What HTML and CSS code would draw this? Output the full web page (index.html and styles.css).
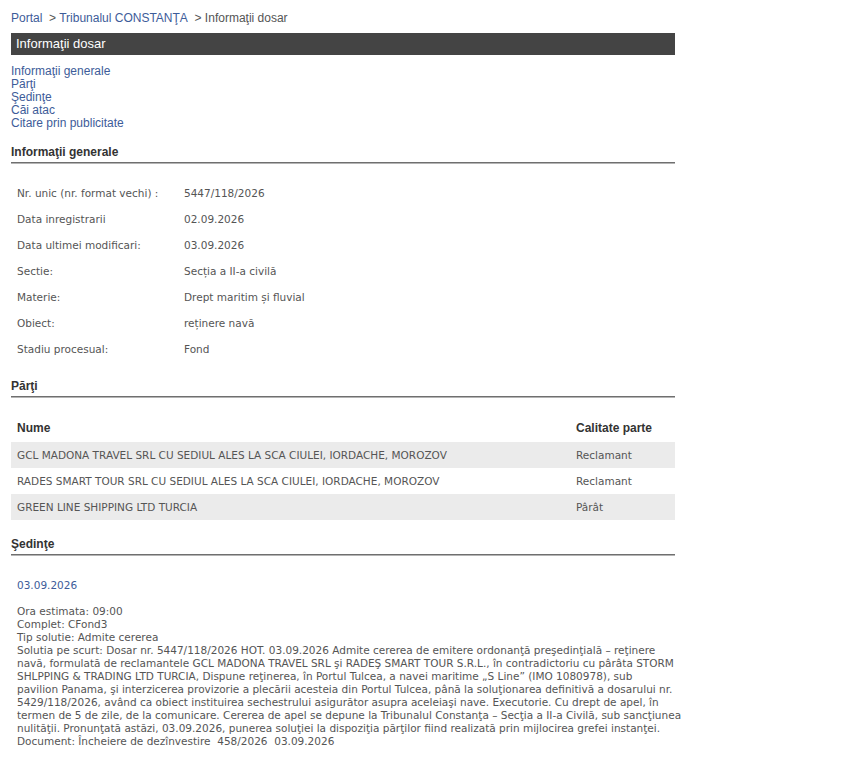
FILE: index.html
```html
<!DOCTYPE html>
<html>
  <head>
    <meta charset="utf-8">
    <title>Informaţii dosar</title>
    <link rel="stylesheet" href="styles.css">
  </head>
  <body>

    <div class="page">

      <div class="breadcrumb">
        <a href="#">Portal</a>&nbsp; &gt; <a href="#">Tribunalul CONSTANŢA</a>&nbsp; &gt; Informaţii dosar
      </div>

      <div class="titlebar">Informaţii dosar</div>

      <div class="toc">
        <a href="#generale">Informaţii generale</a><br>
        <a href="#parti">Părţi</a><br>
        <a href="#sedinte">Şedinţe</a><br>
        <a href="#cai">Căi atac</a><br>
        <a href="#citare">Citare prin publicitate</a>
      </div>

      <h2 class="section" id="generale">Informaţii generale</h2>

      <div class="info">
        <div class="label">Nr. unic (nr. format vechi) :</div><div class="value"><span>5447/118/2026</span></div>
        <div class="label">Data inregistrarii</div><div class="value"><span>02.09.2026</span></div>
        <div class="label">Data ultimei modificari:</div><div class="value"><span>03.09.2026</span></div>
        <div class="label">Sectie:</div><div class="value"><span>Sec&#539;ia a II-a civil&#259;</span></div>
        <div class="label">Materie:</div><div class="value"><span>Drept maritim &#537;i fluvial</span></div>
        <div class="label">Obiect:</div><div class="value"><span>re&#539;inere nav&#259;</span></div>
        <div class="label">Stadiu procesual:</div><div class="value"><span>Fond</span></div>
      </div>

      <h2 class="section" id="parti">Părţi</h2>

      <table class="parti">
        <tr>
          <th>Nume</th>
          <th class="calitate">Calitate parte</th>
        </tr>
        <tr class="odd">
          <td>GCL MADONA TRAVEL SRL CU SEDIUL ALES LA SCA CIULEI, IORDACHE, MOROZOV</td>
          <td class="calitate">Reclamant</td>
        </tr>
        <tr>
          <td>RADES SMART TOUR SRL CU SEDIUL ALES LA SCA CIULEI, IORDACHE, MOROZOV</td>
          <td class="calitate">Reclamant</td>
        </tr>
        <tr class="odd">
          <td>GREEN LINE SHIPPING LTD TURCIA</td>
          <td class="calitate">Pârât</td>
        </tr>
      </table>

      <h2 class="section" id="sedinte">Şedinţe</h2>

      <div class="sedinta">
        <div class="data">03.09.2026</div>
        <br>
        Ora estimata: 09:00<br>
        Complet: CFond3<br>
        Tip solutie: Admite cererea<br>
        Solutia pe scurt: Dosar nr. 5447/118/2026 HOT. 03.09.2026 Admite cererea de emitere ordonanţă preşedinţială – reţinere<br>
        navă, formulată de reclamantele GCL MADONA TRAVEL SRL şi RADEŞ SMART TOUR S.R.L., în contradictoriu cu pârâta STORM<br>
        SHLPPING &amp; TRADING LTD TURCIA, Dispune reţinerea, în Portul Tulcea, a navei maritime „S Line” (IMO 1080978), sub<br>
        pavilion Panama, şi interzicerea provizorie a plecării acesteia din Portul Tulcea, până la soluţionarea definitivă a dosarului nr.<br>
        5429/118/2026, având ca obiect instituirea sechestrului asigurător asupra aceleiaşi nave. Executorie. Cu drept de apel, în<br>
        termen de 5 de zile, de la comunicare. Cererea de apel se depune la Tribunalul Constanţa – Secţia a II-a Civilă, sub sancţiunea<br>
        nulităţii. Pronunţată astăzi, 03.09.2026, punerea soluţiei la dispoziţia părţilor fiind realizată prin mijlocirea grefei instanţei.<br>
        Document: Încheiere de dezînvestire &nbsp;458/2026 &nbsp;03.09.2026
      </div>

    </div>

  </body>
</html>
```

FILE: styles.css
```css
body {
  margin: 0;
  background-color: #ffffff;
  font-family: "Liberation Sans", Arial, sans-serif;
  font-size: 12px;
  color: #555555;
}

.page {
  width: 664px;
  padding: 0 11px 20px 11px;
}

a {
  color: #3d5c99;
  text-decoration: none;
}

.breadcrumb {
  padding-top: 11px;
  line-height: 14px;
  font-size: 12px;
  color: #555555;
}

.titlebar {
  margin-top: 8px;
  height: 22px;
  line-height: 22px;
  padding-left: 5px;
  background-color: #444444;
  color: #ffffff;
  font-size: 13px;
}

.toc {
  margin-top: 10px;
  margin-bottom: -2px;
  line-height: 13px;
  font-size: 12px;
}

.section {
  margin: 16px 0 1px 0;
  padding-bottom: 2px;
  line-height: 16px;
  font-size: 12px;
  font-weight: bold;
  color: #333333;
  border-bottom: 1px solid #6f6f6f;
  box-shadow: 0 1px 0 #b4b4b4;
}

/* general info: label / value pairs */
.info {
  display: grid;
  grid-template-columns: 167px 1fr;
  grid-auto-rows: 26px;
  align-items: center;
  margin-top: 17px;
  font-family: "DejaVu Sans", Verdana, sans-serif;
  font-size: 10.5px;
  color: #555555;
}

.info .label,
.info .value {
  padding-left: 6px;
  white-space: nowrap;
}

table {
  width: 100%;
  table-layout: fixed;
  border-collapse: collapse;
  font-family: "DejaVu Sans", Verdana, sans-serif;
  font-size: 10.5px;
  color: #555555;
}

td {
  height: 26px;
  padding: 0 6px;
  text-align: left;
  vertical-align: middle;
  white-space: nowrap;
}

.parti {
  margin-top: 17px;
}

.parti th {
  height: 28px;
  padding: 0 6px;
  text-align: left;
  vertical-align: middle;
  font-family: "Liberation Sans", Arial, sans-serif;
  font-size: 12px;
  font-weight: bold;
  color: #333333;
}

.parti .calitate {
  width: 93px;
}

.parti .odd td {
  background-color: #ebebeb;
}

.sedinta {
  margin-top: 24px;
  padding: 0 6px;
  line-height: 13px;
  font-family: "DejaVu Sans", Verdana, sans-serif;
  font-size: 10.5px;
  color: #555555;
  white-space: nowrap;
}

.sedinta .data {
  color: #3d5c99;
}
```
